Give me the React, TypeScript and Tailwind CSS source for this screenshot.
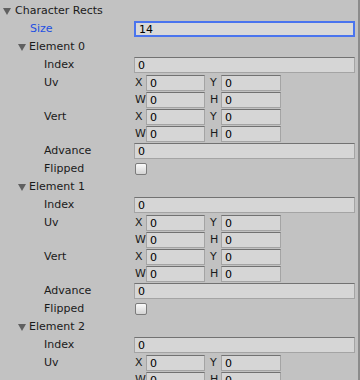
import React from 'react';

const font = { fontFamily: '"DejaVu Sans", Verdana, sans-serif' };

const Triangle: React.FC = () => (
  <svg width="8" height="7" viewBox="0 0 8 7" className="shrink-0">
    <polygon points="0,0 8,0 4,7" fill="#606060" />
  </svg>
);

const Foldout: React.FC<{ tri: string; label: string }> = ({ tri, label }) => (
  <div className="flex items-center h-4 mb-[2px]">
    <div className={`${tri} flex items-center`}>
      <Triangle />
    </div>
    <span className="text-[#1a1a1a] pt-[1px]">{label}</span>
  </div>
);

const TextField: React.FC<{ value: string; focused?: boolean; className?: string }> = ({ value, focused, className }) => (
  <div
    className={`h-4 flex items-center pl-[3px] text-black leading-none ${
      focused
        ? 'border-2 border-[#4a74ee] bg-[#d9d9d9] pl-[2px]'
        : 'border border-[#a4a4a4] border-t-[#727272] bg-[#d6d6d6]'
    } ${className ?? 'flex-1'}`}
  >
    {value}
  </div>
);

const PropRow: React.FC<{ pad: string; label: string; blue?: boolean; children: React.ReactNode }> = ({ pad, label, blue, children }) => (
  <div className="flex items-center h-4 mb-[2px]">
    <div className={`w-[134px] shrink-0 pt-[1px] ${pad} ${blue ? 'text-[#1d4fe3]' : 'text-[#1a1a1a]'}`}>{label}</div>
    <div className="flex-1 flex items-center mr-[3px]">{children}</div>
  </div>
);

const RectLine: React.FC<{ a: string; b: string }> = ({ a, b }) => (
  <div className="flex items-center h-4 mb-[1px]">
    <span className="w-[12px] pl-[1px] text-[#1a1a1a]">{a}</span>
    <TextField value="0" className="w-[59px]" />
    <span className="w-[12px] ml-[4px] pl-[1px] text-[#1a1a1a]">{b}</span>
    <TextField value="0" className="w-[60px]" />
  </div>
);

const RectRow: React.FC<{ label: string }> = ({ label }) => (
  <div className="flex">
    <div className="w-[134px] shrink-0 pl-[44px] pt-[1px] h-4 flex items-center text-[#1a1a1a]">{label}</div>
    <div className="flex flex-col">
      <RectLine a="X" b="Y" />
      <RectLine a="W" b="H" />
    </div>
  </div>
);

const Checkbox: React.FC = () => (
  <div className="w-[12px] h-[12px] ml-[1px] rounded-[2px] border border-[#7c7c7c] bg-gradient-to-b from-[#fafafa] to-[#d4d4d4]" />
);

const Element: React.FC<{ index: number }> = ({ index }) => (
  <div>
    <Foldout tri="pl-[18px] w-[29px]" label={`Element ${index}`} />
    <PropRow pad="pl-[44px]" label="Index">
      <TextField value="0" />
    </PropRow>
    <RectRow label="Uv" />
    <RectRow label="Vert" />
    <PropRow pad="pl-[44px]" label="Advance">
      <TextField value="0" />
    </PropRow>
    <PropRow pad="pl-[44px]" label="Flipped">
      <Checkbox />
    </PropRow>
  </div>
);

const App: React.FC = () => {
  return (
    <div className="w-[360px] h-[380px] overflow-hidden bg-[#c2c2c2] flex text-[11px]" style={font}>
      <div className="w-[358px] pt-[3px]">
        <Foldout tri="pl-[3px] w-[15px]" label="Character Rects" />
        <PropRow pad="pl-[30px]" label="Size" blue>
          <TextField value="14" focused />
        </PropRow>
        {[0, 1, 2].map((i) => (
          <Element key={i} index={i} />
        ))}
      </div>
      <div className="w-[2px] bg-[#8c8c8c]" />
    </div>
  );
};

export default App;
